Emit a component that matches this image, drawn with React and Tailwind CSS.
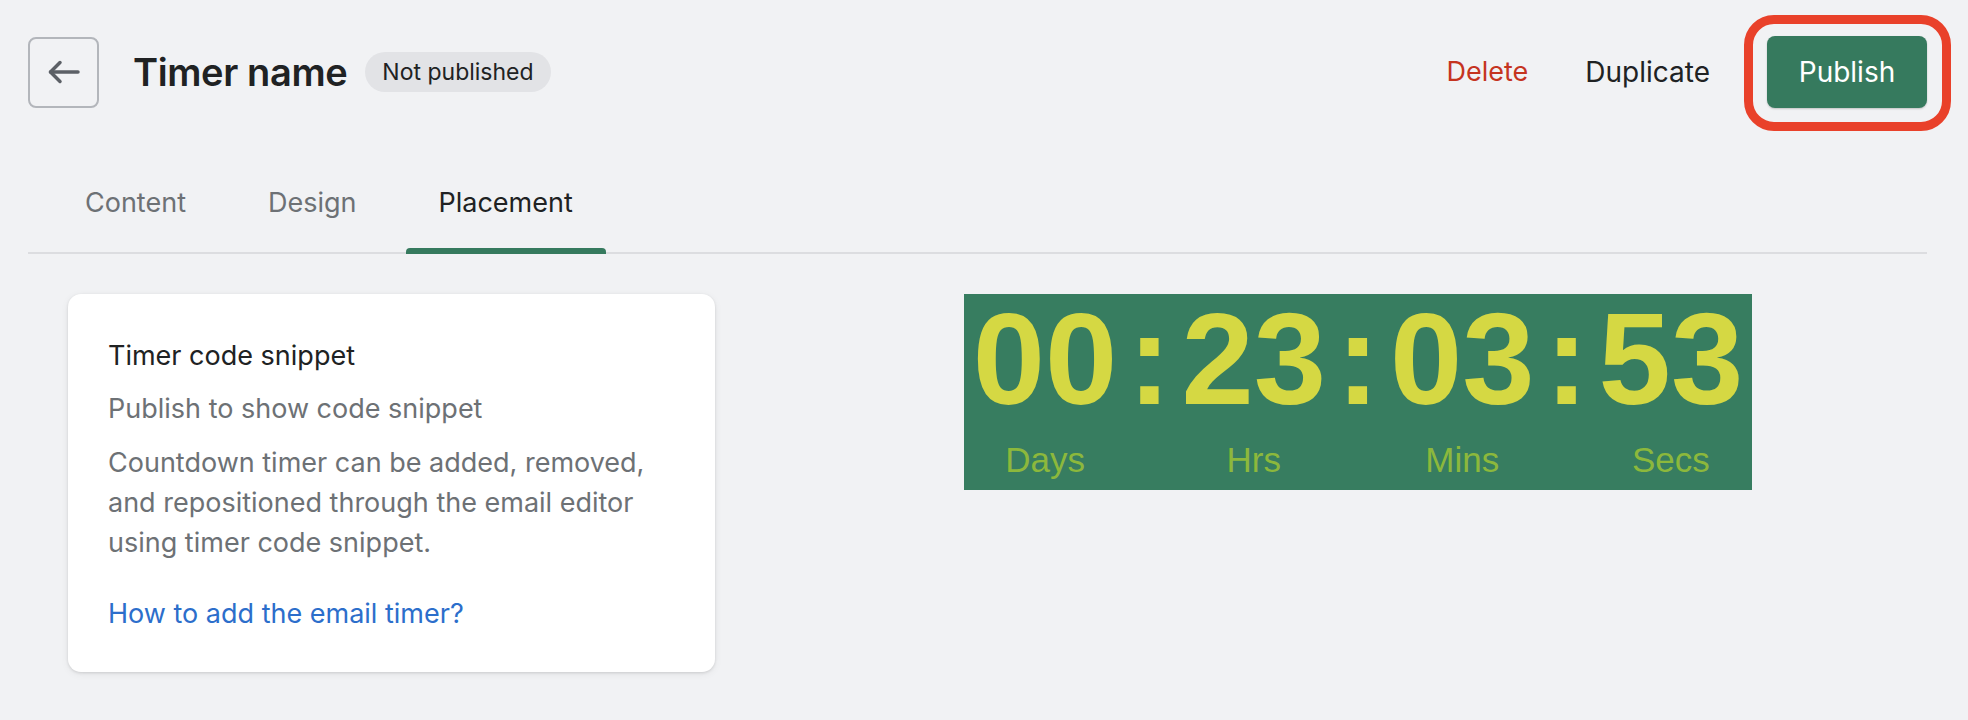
export default function App() {
  const units = [
    { value: '00', label: 'Days' },
    { value: '23', label: 'Hrs' },
    { value: '03', label: 'Mins' },
    { value: '53', label: 'Secs' },
  ];

  return (
    <div className="h-[720px] w-full bg-[#f1f2f4] pl-[28px] pr-[41px] pt-[36px] font-['Inter',sans-serif] text-[#202223]">
      {/* header */}
      <header className="flex h-[72px] items-center">
        <button className="flex h-[71px] w-[71px] items-center justify-center rounded-[8px] border-2 border-[#b3b6bb]">
          <svg width="32" height="24" viewBox="0 0 32 24" fill="none" stroke="#5c6066" strokeWidth="3.5" strokeLinecap="round" strokeLinejoin="round">
            <path d="M30 12H2.5" />
            <path d="M12 2.5L2.5 12L12 21.5" />
          </svg>
        </button>
        <h1 className="ml-[34px] text-[38px] font-semibold tracking-[-0.01em]">Timer name</h1>
        <span className="ml-[18px] flex h-[40px] items-center rounded-full bg-[#e2e3e6] px-[17px] text-[23px]">Not published</span>

        <div className="ml-auto flex items-center">
          <button className="text-[27px] text-[#c5341f]">Delete</button>
          <button className="ml-[57px] text-[28px]">Duplicate</button>
          <div className="relative ml-[57px]">
            <button className="h-[72px] w-[160px] rounded-[8px] bg-[#367a5e] text-[28px] text-white shadow-[0_1px_2px_rgba(0,0,0,0.2)]">Publish</button>
            <span className="pointer-events-none absolute -bottom-[23px] -left-[23px] -right-[24px] -top-[21px] rounded-[30px] border-[9px] border-[#e9412a]" />
          </div>
        </div>
      </header>

      {/* tabs */}
      <nav className="mt-[55px] flex gap-[16px] border-b-2 border-[#dcdde0] pl-[24px]">
        {['Content', 'Design', 'Placement'].map((tab) => {
          const active = tab === 'Placement';
          return (
            <button
              key={tab}
              className={
                active
                  ? 'relative px-[33px] pb-[29px] pt-[20px] text-[27px] leading-[40px] text-[#202223]'
                  : 'relative px-[33px] pb-[29px] pt-[20px] text-[27px] leading-[40px] text-[#6d7175]'
              }
            >
              {tab}
              {active && <span className="absolute -bottom-[2px] left-0 right-0 h-[6px] rounded-t-[4px] bg-[#367a5e]" />}
            </button>
          );
        })}
      </nav>

      {/* content */}
      <main className="flex items-start pt-[40px]">
        <section className="ml-[40px] w-[647px] rounded-[13px] bg-white px-10 pb-[38px] pt-[42px] text-[27px] leading-[40px] shadow-[0_1px_3px_rgba(0,0,0,0.12),0_2px_8px_rgba(0,0,0,0.06)]">
          <h2>Timer code snippet</h2>
          <p className="mt-[13px] text-[#6d7175]">Publish to show code snippet</p>
          <p className="mt-[14px] text-[#6d7175]">
            Countdown timer can be added, removed, and repositioned through the email editor using timer code snippet.
          </p>
          <a href="#" className="mt-[31px] block text-[#2c6ecb]">How to add the email timer?</a>
        </section>

        <div className="ml-[249px] flex h-[196px] w-[788px] justify-center bg-[#377d60] font-['Liberation_Sans',Arial,sans-serif]">
          {units.map((u, i) => (
            <div key={u.label} className="flex">
              {i > 0 && (
                <span className="w-[64px] text-center text-[130px] font-bold leading-none text-[#d5d843]">:</span>
              )}
              <div className="flex flex-col items-center">
                <span className="text-[130px] font-bold leading-none text-[#d5d843]">{u.value}</span>
                <span className="mt-[18px] text-[35px] leading-none text-[#8cb83c]">{u.label}</span>
              </div>
            </div>
          ))}
        </div>
      </main>
    </div>
  );
}
